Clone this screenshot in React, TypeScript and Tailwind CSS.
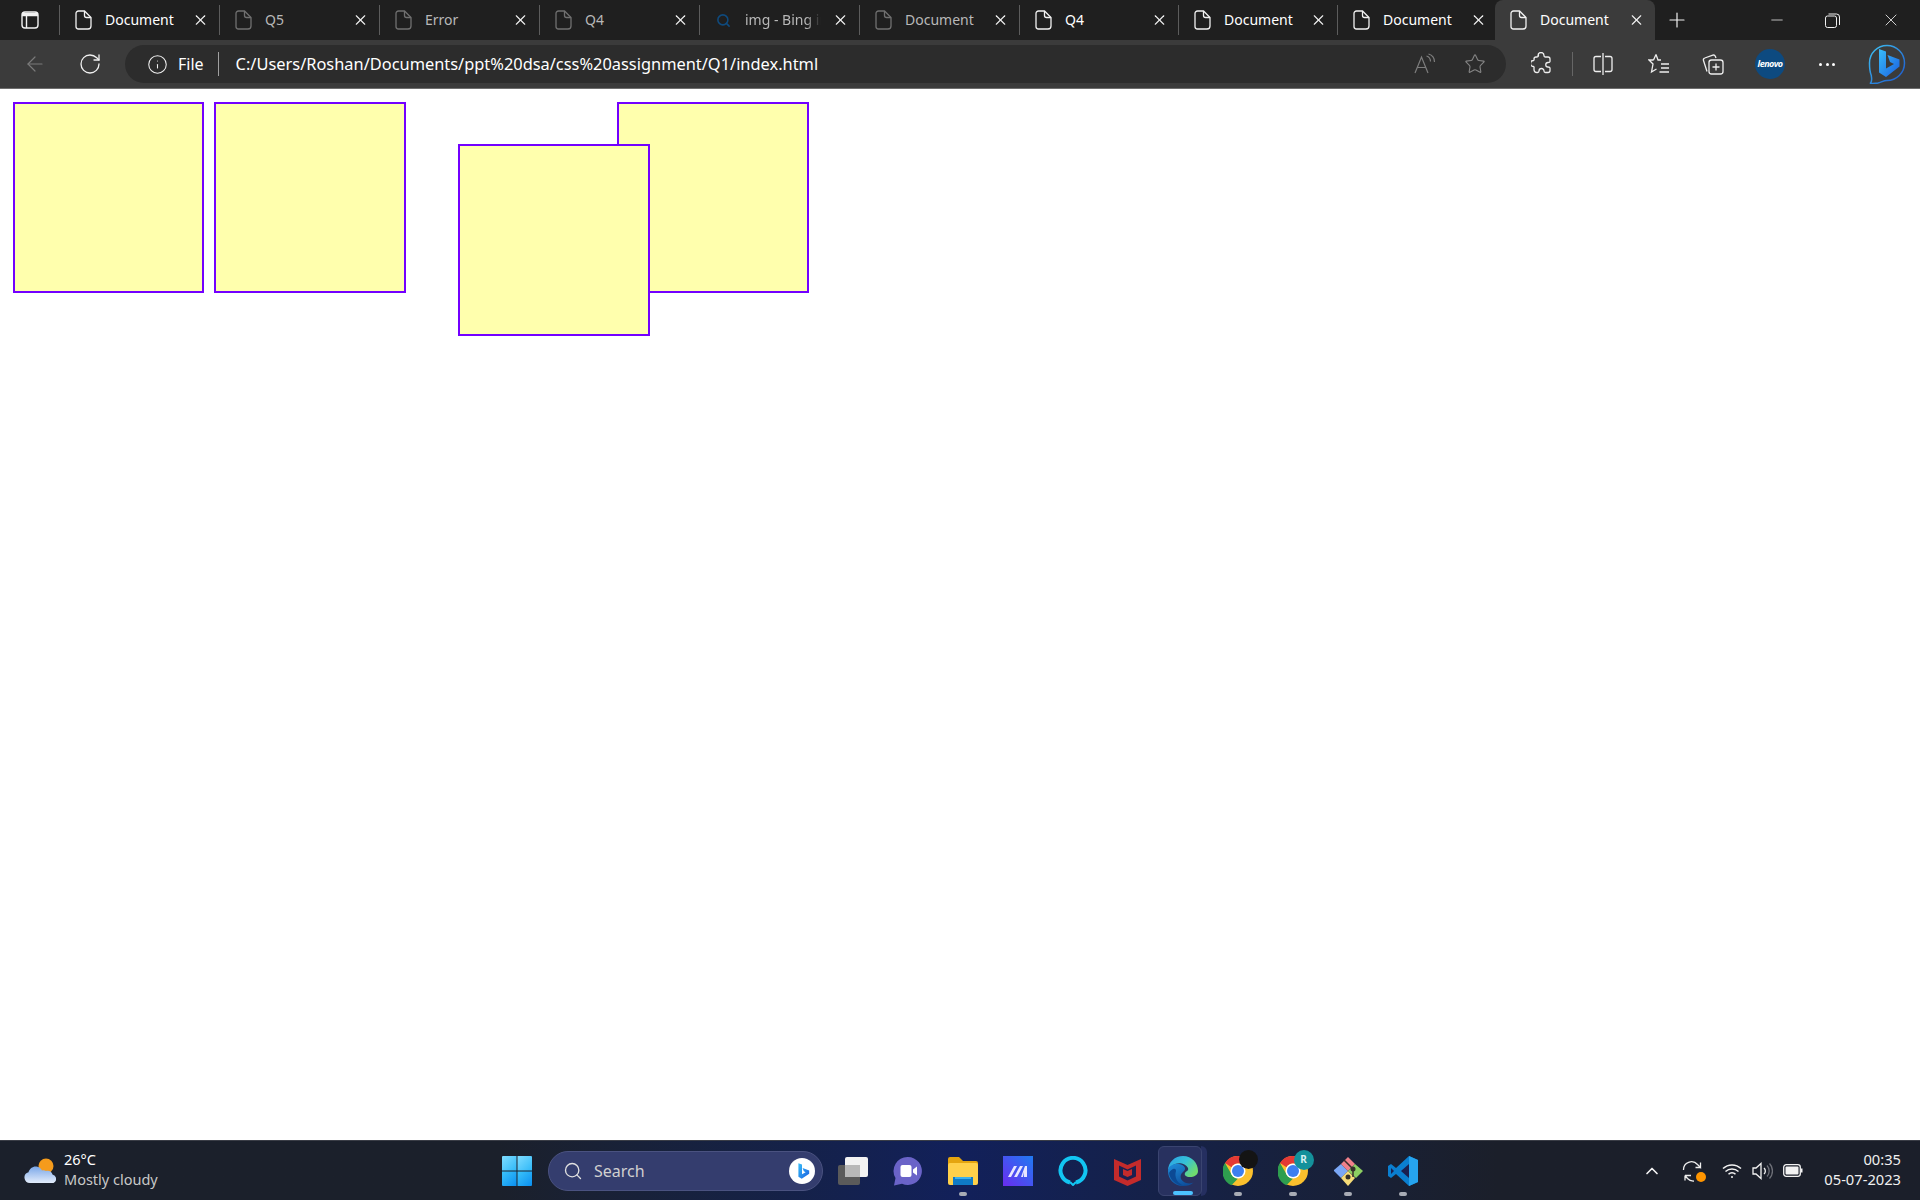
import {
  ArrowLeft,
  ChevronUp,
  Info,
  Minus,
  Plus,
  RotateCw,
  Search,
  Star,
  X,
} from "lucide-react";
import type { ReactNode } from "react";

type TabData = { title: string; dim?: boolean; bing?: boolean; active?: boolean; narrow?: boolean };

const tabs: TabData[] = [
  { title: "Document" },
  { title: "Q5", dim: true },
  { title: "Error", dim: true },
  { title: "Q4", dim: true },
  { title: "img - Bing images", dim: true, bing: true },
  { title: "Document", dim: true },
  { title: "Q4", narrow: true },
  { title: "Document", narrow: true },
  { title: "Document" },
  { title: "Document", active: true },
];

function PageIcon({ dim }: { dim?: boolean }) {
  return (
    <svg width="17" height="20" viewBox="0 0 17 20" fill="none" stroke={dim ? "#707070" : "#f2f2f2"} strokeWidth="1.3">
      <path d="M3.5 1h6l6.500 6.500V16a3 3 0 0 1-3 3H3.500A2.500 2.500 0 0 1 1 16.500v-13A2.500 2.500 0 0 1 3.500 1Z" />
      <path d="M9.500 1v4.500a2 2 0 0 0 2 2H16" />
    </svg>
  );
}

function Tab({ tab }: { tab: TabData }) {
  return (
    <div
      className={`relative flex shrink-0 items-center pl-[15px] ${tab.narrow ? "w-[159px]" : "w-[160px]"} ${
        tab.active ? "-ml-[2px] h-10 rounded-t-lg bg-[#3b3b3b]" : "my-auto h-[30px] border-l border-[#5c5c5c]"
      }`}
    >
      {tab.bing ? (
        <span className="flex w-[17px] justify-center">
          <Search size={15} color="#0f4a7d" strokeWidth={2.5} />
        </span>
      ) : (
        <PageIcon dim={tab.dim} />
      )}
      <span
        className={`-mt-[2px] ml-[13px] overflow-hidden text-[14px] whitespace-nowrap ${
          tab.bing ? "w-[76px] [mask-image:linear-gradient(to_right,black_80%,transparent)]" : "w-[78px]"
        } ${tab.dim ? "text-[#b8b8b8]" : "text-white"}`}
      >
        {tab.title}
      </span>
      <X size={17} strokeWidth={1.5} color="#f2f2f2" className="absolute right-[10px] top-1/2 -translate-y-1/2" />
    </div>
  );
}

function SidebarIcon() {
  return (
    <svg width="18" height="18" viewBox="0 0 18 18" fill="none" stroke="#f2f2f2" strokeWidth="1.4">
      <rect x="1" y="1" width="16" height="16" rx="3" />
      <path d="M1 3.500h16" strokeWidth="3.500" />
      <path d="M5.500 5V17" />
    </svg>
  );
}

function BingMark({ size }: { size: number }) {
  return (
    <svg width={size} height={size} viewBox="0 0 40 40" fill="none">
      <defs>
        <linearGradient id="bingB" x1="0" y1="0" x2="1" y2="1">
          <stop offset="0" stopColor="#37bdf8" />
          <stop offset="1" stopColor="#1a5fe0" />
        </linearGradient>
      </defs>
      <path d="M14 7l6 2v16.500l6-3.500-3-1.600-2-5.400 11 4v5.500L19.500 33 14 29.500Z" fill="url(#bingB)" />
    </svg>
  );
}

function BingButton() {
  return (
    <svg width="38" height="40" viewBox="0 0 38 40" fill="none">
      <defs>
        <linearGradient id="bingRing" x1="0" y1="0" x2="1" y2="1">
          <stop offset="0" stopColor="#3fc3f4" />
          <stop offset="1" stopColor="#1c52c8" />
        </linearGradient>
        <linearGradient id="bingB2" x1="0" y1="0" x2="1" y2="1">
          <stop offset="0" stopColor="#38bdf8" />
          <stop offset="1" stopColor="#1a5fe0" />
        </linearGradient>
      </defs>
      <path
        d="M19 1.500c9.500 0 17.500 7.500 17.500 17.500S28.500 36.500 19 36.500c-3 0-6 1.800-9 2.500-2.500.5-8.500 1-7.500 0 2-2 1-5 .8-7.500C1.800 28 1.500 23 1.500 19 1.500 9 9.500 1.500 19 1.500Z"
        stroke="url(#bingRing)"
        strokeWidth="1.500"
      />
      <path d="M11 5l7 2.500v17l8-4.500-4-2-2.500-7 12 4.500v7L18 33l-7-4.500Z" fill="url(#bingB2)" />
    </svg>
  );
}

function Toolbar() {
  return (
    <div className="flex h-[49px] items-center border-b border-[#6e6e6e] bg-[#3b3b3b]">
      <div className="flex w-[125px] shrink-0 items-center">
        <ArrowLeft size={24} strokeWidth={1.2} color="#7a7a7a" className="ml-[23px]" />
        <RotateCw size={24} strokeWidth={1.3} color="#f0f0f0" className="ml-[31px]" />
      </div>
      <div className="flex h-[38px] w-[1381px] shrink-0 items-center rounded-full bg-[#2c2c2c] text-white">
        <Info size={21} strokeWidth={1.2} color="#f0f0f0" className="ml-[22px]" />
        <span className="ml-[10px] text-[16px]">File</span>
        <span className="ml-[14px] h-[24px] w-px bg-[#a0a0a0]" />
        <span className="ml-[17px] text-[16.4px]">C:/Users/Roshan/Documents/ppt%20dsa/css%20assignment/Q1/index.html</span>
        <div className="ml-auto flex items-center gap-[28px] pr-[20px]">
          <svg width="22" height="22" viewBox="0 0 22 22" fill="none" stroke="#7d7d7d" strokeWidth="1.2">
            <path d="M1 20L7.500 4l6.500 16M3.500 14.500h8" />
            <path d="M12.500 3c2.500.7 4 2.700 4 5.500M14.500 1c3.500 1 6 4 6 8" />
          </svg>
          <Star size={22} strokeWidth={1.2} color="#858585" />
        </div>
      </div>
      <div className="flex-1 self-stretch">
        <ToolbarIcons />
      </div>
    </div>
  );
}

function ToolbarIcons() {
  return (
    <div className="flex h-full items-center text-[#eeeeee]">
      <span className="ml-[24px] flex w-[22px] justify-center">
        <svg width="21" height="24" viewBox="0 0 21 24" fill="none" stroke="#eeeeee" strokeWidth="1.300">
          <path d="M7 3.500a3 3 0 0 1 6 0c0 1 .5 1.500 1.500 1.500H17a2 2 0 0 1 2 2v2.500c0 1-1 1-2 1a2.200 2.200 0 0 0 0 4.500c1 0 2 0 2 1v2.500a2 2 0 0 1-2 2h-2.500c-1 0-1.500-.5-1.500-1.500a2.500 2.500 0 0 0-5 0c0 1-.5 1.500-1.500 1.500H6a3 3 0 0 1-3-3v-1c0-1 .5-1.500-.5-2a3 3 0 0 1 0-6c1-.5.500-1 .500-2V7a2 2 0 0 1 2-2h1c1 0 1.500-.5 1.500-1.500Z" />
        </svg>
      </span>
      <span className="ml-[20px] h-[24px] w-px bg-[#666666]" />
      <span className="ml-[20px] flex w-[20px] justify-center">
        <svg width="20" height="24" viewBox="0 0 20 24" fill="none" stroke="#eeeeee" strokeWidth="1.300">
          <path d="M10 1v22" />
          <path d="M8 4.500H3a2 2 0 0 0-2 2v11a2 2 0 0 0 2 2h5M12 4.500h5a2 2 0 0 1 2 2v11a2 2 0 0 1-2 2h-5" />
        </svg>
      </span>
      <span className="ml-[35px] flex w-[22px] justify-center">
        <svg width="22" height="22" viewBox="0 0 22 22" fill="none" stroke="#eeeeee" strokeWidth="1.300">
          <path d="M8 1.500l2 5.500h3M5.500 7H1l4 4-1.500 8L8.500 16M8 1.500L5.500 7" />
          <path d="M13 11h8M13 15h8M11.500 19h9.500" />
        </svg>
      </span>
      <span className="ml-[32px] flex w-[22px] justify-center">
        <svg width="22" height="24" viewBox="0 0 22 24" fill="none" stroke="#eeeeee" strokeWidth="1.300">
          <path d="M5 19.500L1.500 8.500a2 2 0 0 1 1.300-2.500l8-2.800a2 2 0 0 1 2.500 1l.7 1.800" />
          <rect x="7" y="8" width="14" height="14" rx="2.500" />
          <path d="M14 11.500v7M10.500 15h7" />
        </svg>
      </span>
      <span className="ml-[31px] flex h-[30px] w-[30px] items-center justify-center rounded-full bg-[#0d4a80] text-[9px] font-bold italic tracking-[-0.5px] text-white">
        lenovo
      </span>
      <span className="ml-[34px] flex w-[16px] justify-between">
        <i className="h-[3px] w-[3px] rounded-full bg-white" />
        <i className="h-[3px] w-[3px] rounded-full bg-white" />
        <i className="h-[3px] w-[3px] rounded-full bg-white" />
      </span>
      <span className="ml-[33px] flex">
        <BingButton />
      </span>
    </div>
  );
}

function WeatherIcon() {
  return (
    <svg width="32" height="28" viewBox="0 0 32 28">
      <defs>
        <linearGradient id="cloud" x1="0" y1="0" x2="0" y2="1">
          <stop offset="0" stopColor="#7aa7e8" />
          <stop offset="1" stopColor="#e3ecfb" />
        </linearGradient>
      </defs>
      <circle cx="22" cy="9" r="7.500" fill="#f59b1c" />
      <path d="M6 26a5.500 5.500 0 0 1-1.500-10.800C5.500 11.500 9 9 12.500 9.500c2.500.3 4.500 2 5.500 4 1-.5 3-.3 4 .5 2.500-1 6 .5 6.500 3.500a4.500 4.500 0 0 1 1 8.500Z" fill="url(#cloud)" />
    </svg>
  );
}

function WindowsLogo() {
  return (
    <svg width="30" height="30" viewBox="0 0 30 30">
      <defs>
        <linearGradient id="winTop" x1="0" y1="0" x2="1" y2="1">
          <stop offset="0" stopColor="#7fdcff" />
          <stop offset="1" stopColor="#2fb8f8" />
        </linearGradient>
        <linearGradient id="winBottom" x1="0" y1="0" x2="1" y2="1">
          <stop offset="0" stopColor="#3cc4fb" />
          <stop offset="1" stopColor="#0a8ff0" />
        </linearGradient>
      </defs>
      <path d="M1 0h13.500v14.500H0V1a1 1 0 0 1 1-1Z" fill="url(#winTop)" />
      <path d="M15.500 0H29a1 1 0 0 1 1 1v13.500H15.500Z" fill="url(#winTop)" />
      <path d="M0 15.500h14.500V30H1a1 1 0 0 1-1-1Z" fill="url(#winBottom)" />
      <path d="M15.500 15.500H30V29a1 1 0 0 1-1 1H15.500Z" fill="url(#winBottom)" />
    </svg>
  );
}

function ChromeLogo() {
  return (
    <svg width="30" height="30" viewBox="0 0 30 30">
      <circle cx="15" cy="15" r="15" fill="#fbc02d" />
      <path d="M15 0a15 15 0 0 1 13 7.500H15a7.500 7.500 0 0 0-6.500 3.750L2 7A15 15 0 0 1 15 0Z" fill="#e53935" />
      <path d="M2 7l6.500 11.250A7.500 7.500 0 0 0 15 22.500l-6.500 6.800A15 15 0 0 1 2 7Z" fill="#2e9e4f" />
      <circle cx="15" cy="15" r="7.500" fill="#ffffff" />
      <circle cx="15" cy="15" r="6" fill="#3d7ff0" />
    </svg>
  );
}

function GitIcon() {
  return (
    <svg width="30" height="30" viewBox="0 0 30 30">
      <path d="M8 8l7 7-7 7-7-7a1.500 1.500 0 0 1 0-1Z" fill="#7aa7f5" />
      <path d="M15 1l7 7-7 7-7-7Z" fill="#f0808a" />
      <path d="M22 8l8 7-7 7-8-7Z" fill="#8ccf62" />
      <path d="M15 15l7 7-7 8-7-8Z" fill="#f6dc78" />
      <path d="M11 4l9 9M20 13v8" stroke="#3a2d2d" strokeWidth="1.500" />
      <circle cx="20" cy="13" r="2.500" fill="#33302a" />
      <circle cx="15" cy="21" r="2.500" fill="#33302a" />
    </svg>
  );
}

function EdgeLogo() {
  return (
    <svg width="30" height="30" viewBox="0 0 30 30">
      <defs>
        <linearGradient id="edgeTop" x1="0" y1="0" x2="1" y2="0.600">
          <stop offset="0" stopColor="#2a9fe6" />
          <stop offset="0.550" stopColor="#35c1d8" />
          <stop offset="1" stopColor="#6fdc6f" />
        </linearGradient>
        <linearGradient id="edgeLow" x1="0" y1="0" x2="0.600" y2="1">
          <stop offset="0" stopColor="#1f8fdc" />
          <stop offset="1" stopColor="#0e4f9c" />
        </linearGradient>
      </defs>
      <path
        d="M15 0C24 0 30 7 30 15C30 19 26 21 22 21C18 21 16 19 17 17C18 15 21 15 20 12C18 8 12 6 7 8C3 10 0 13 0 15C0 6 7 0 15 0Z"
        fill="url(#edgeTop)"
      />
      <path
        d="M0 15C0 10 6 7 11 8C17 9 19 13 15 16C11 19 12 25 18 27C22 28 25 27 26 26C23 29 19 30 15 30C6 30 0 23 0 15Z"
        fill="url(#edgeLow)"
      />
      <path d="M8 15C6 21 9 28 17 29.800C10 30 2 25 1 17C3 13 8 11 8 15Z" fill="#0c4a94" />
    </svg>
  );
}

function Cell({ children, dot, active }: { children: ReactNode; dot?: boolean; active?: boolean }) {
  return (
    <div className="relative flex h-[50px] w-[55px] shrink-0 items-center justify-center">
      {active && (
        <>
          <span className="absolute left-[46px] top-0 h-[50px] w-[6px] rounded-r-md bg-[#252f60]" />
          <span className="absolute left-[3px] top-0 h-[50px] w-[44px] rounded-md border border-[#3a4470] bg-[#28315f]" />
        </>
      )}
      <span className="relative flex">{children}</span>
      {dot && <span className="absolute bottom-0 left-1/2 h-[4px] w-[8px] -translate-x-1/2 rounded-full bg-[#a8acb5]" />}
      {active && <span className="absolute bottom-[1px] left-1/2 h-[4px] w-[20px] -translate-x-1/2 rounded-full bg-[#4cc2ff]" />}
    </div>
  );
}

function TaskbarApps() {
  return (
    <div className="flex items-center">
      <Cell>
        <svg width="30" height="28" viewBox="0 0 30 28">
          <rect x="0" y="8" width="22" height="20" rx="2" fill="#5a5a5a" />
          <rect x="7" y="0" width="23" height="20" rx="2" fill="#f2f2f2" />
          <rect x="7" y="8" width="15" height="12" fill="#b8b8b8" />
        </svg>
      </Cell>
      <Cell>
        <svg width="30" height="30" viewBox="0 0 30 30">
          <path d="M15 1a14 14 0 1 1-6 26.700L1 29.500l1.500-7.500A14 14 0 0 1 15 1Z" fill="#6a63c8" />
          <rect x="7.500" y="9" width="11" height="12" rx="2" fill="#ffffff" />
          <path d="M20 13.500l4-3v9l-4-3Z" fill="#ffffff" />
        </svg>
      </Cell>
      <Cell dot>
        <svg width="30" height="28" viewBox="0 0 30 28">
          <path d="M0 2a2 2 0 0 1 2-2h9l4 4h13a2 2 0 0 1 2 2v2H0Z" fill="#e5a50f" />
          <rect x="0" y="6" width="30" height="22" rx="2" fill="#ffd04a" />
          <rect x="5" y="20" width="20" height="8" fill="#0f7ac6" />
          <rect x="7" y="20" width="16" height="2" fill="#3db1ec" />
        </svg>
      </Cell>
      <Cell>
        <svg width="30" height="30" viewBox="0 0 30 30">
          <defs>
            <linearGradient id="ms" x1="0" y1="1" x2="1" y2="0">
              <stop offset="0" stopColor="#6a2cf0" />
              <stop offset="1" stopColor="#1f7bf2" />
            </linearGradient>
          </defs>
          <rect width="30" height="30" fill="url(#ms)" />
          <path d="M5 21l6-11h3l-6 11ZM11 21l6-11h3l-6 11ZM18 21l4-11h2v11h-3v-5l-1 5Z" fill="#e8e6ff" />
        </svg>
      </Cell>
      <Cell>
        <svg width="30" height="30" viewBox="0 0 30 30" fill="none">
          <path d="M12 26.500A12.500 12.500 0 1 1 18 26.500" stroke="#12c5f2" strokeWidth="4" />
          <path d="M12 26l3 3 3-3" stroke="#12c5f2" strokeWidth="2" />
        </svg>
      </Cell>
      <Cell>
        <svg width="27" height="30" viewBox="0 0 27 30">
          <path d="M0 3l13.500 6L27 3v21L13.500 30 0 24Z" fill="#c42b2b" />
          <path d="M5 9.500l8.500 4 8.500-4v11l-8.500 4-8.500-4Z" fill="#1a2050" />
          <path d="M9 13l4.500 2 4.500-2v6l-4.500 2L9 19Z" fill="#c42b2b" />
        </svg>
      </Cell>
      <Cell active>
        <EdgeLogo />
      </Cell>
      <Cell dot>
        <span className="relative flex">
          <ChromeLogo />
          <span className="absolute -right-[5px] -top-[6px] h-[19px] w-[19px] rounded-full bg-[#141414]" />
        </span>
      </Cell>
      <Cell dot>
        <span className="relative flex">
          <ChromeLogo />
          <span className="absolute -right-[6px] -top-[6px] flex h-[20px] w-[20px] items-center justify-center rounded-full bg-[#14919b] text-[10px] font-bold text-[#d8f0f2]">
            R
          </span>
        </span>
      </Cell>
      <Cell dot>
        <GitIcon />
      </Cell>
      <Cell dot>
        <svg width="30" height="30" viewBox="0 0 30 30">
          <path d="M21 0l9 4v22l-9 4-13-12-5 4-3-2V10l3-2 5 4Z" fill="#0a7fd0" />
          <path d="M21 0l9 4v22l-9 4Z" fill="#26a4ee" />
          <path d="M21 8l-8 7 8 7Z" fill="#1a2050" />
          <path d="M3 12l3 3-3 3Z" fill="#1a2050" />
        </svg>
      </Cell>
    </div>
  );
}

function Tray() {
  return (
    <div className="ml-auto flex items-center pr-[19px] text-white">
      <ChevronUp size={20} strokeWidth={2} color="#f5f5f5" />
      <span className="relative ml-[20px] flex">
        <svg width="22" height="22" viewBox="0 0 22 22" fill="none" stroke="#eeeeee" strokeWidth="1.300">
          <path d="M1.500 10a8 8 0 0 1 14-5.500l3 3V2.500M18.500 7.500h-5M3 15.500h6M3 15.500v5M3 15.500l2.500 3A8 8 0 0 0 12 21" />
        </svg>
        <span className="absolute right-[-2px] bottom-[0px] h-[10px] w-[10px] rounded-full bg-[#ff9500]" />
      </span>
      <span className="ml-[18px] flex">
        <svg width="20" height="16" viewBox="0 0 20 16" fill="none" stroke="#f2f2f2" strokeWidth="1.500">
          <path d="M1 5.500a13 13 0 0 1 18 0M3.500 8.500a9.500 9.500 0 0 1 13 0M6.500 11.300a5 5 0 0 1 7 0" />
          <circle cx="10" cy="14" r="1" fill="#f2f2f2" stroke="none" />
        </svg>
      </span>
      <span className="ml-[10px] flex">
        <svg width="21" height="18" viewBox="0 0 21 18" fill="none" strokeWidth="1.300">
          <path d="M1 6h3l5-4.500v15L4 12H1Z" stroke="#f2f2f2" />
          <path d="M12 6a4 4 0 0 1 0 6" stroke="#f2f2f2" />
          <path d="M15 3.500a8 8 0 0 1 0 11M17.500 1.500a11 11 0 0 1 0 15" stroke="#6e7078" />
        </svg>
      </span>
      <span className="ml-[10px] flex">
        <svg width="20" height="13" viewBox="0 0 20 13" fill="none">
          <rect x="0.700" y="0.700" width="16.600" height="11.600" rx="2.500" stroke="#f2f2f2" strokeWidth="1.300" />
          <rect x="2.500" y="2.500" width="13" height="8" rx="1" fill="#f2f2f2" />
          <rect x="18" y="4.500" width="1.500" height="4" fill="#f2f2f2" />
        </svg>
      </span>
      <div className="-mt-[4px] ml-[17px] flex w-[81px] flex-col items-end text-[14.7px] leading-[20px] text-[#f0f0f0]">
        <span>00:35</span>
        <span>05-07-2023</span>
      </div>
    </div>
  );
}

function Taskbar() {
  return (
    <footer className="flex h-[60px] items-center border-t border-[#3a3d46] bg-linear-to-r from-[#1b202b] from-[26%] via-[#12205a] via-[50%] to-[#1b1f2a] to-[78%]">
      <div className="flex w-[502px] shrink-0 items-center pl-[24px]">
        <WeatherIcon />
        <div className="-mt-[4px] ml-[8px] flex flex-col text-[14.5px] leading-[20px]">
          <span className="text-white">26°C</span>
          <span className="text-[#c8c8c8]">Mostly cloudy</span>
        </div>
      </div>
      <WindowsLogo />
      <div className="ml-[16px] flex h-[40px] w-[275px] shrink-0 items-center rounded-full border border-[#4a5280] bg-[#343d6e] pl-[14px] pr-[7px]">
        <Search size={20} strokeWidth={1.6} color="#e0e0e0" />
        <span className="ml-[11px] text-[16px] text-[#d0d0d0]">Search</span>
        <span className="ml-auto flex h-[26px] w-[26px] items-center justify-center rounded-full bg-white">
          <BingMark size={24} />
        </span>
      </div>
      <div className="ml-[2px]">
        <TaskbarApps />
      </div>
      <Tray />
    </footer>
  );
}

function Box({ shifted }: { shifted?: boolean }) {
  return (
    <div
      className={`shrink-0 border-2 border-[#7300ff] bg-[#ffffad] ${
        shifted ? "relative top-[42px] left-[43px] h-[192px] w-[192px]" : "h-[191px] w-[191.6px]"
      }`}
    />
  );
}

export default function App() {
  return (
    <div className="flex h-[1200px] flex-col overflow-hidden bg-white font-['Noto_Sans',sans-serif]">
      <header className="flex h-10 items-center bg-[#1f1f1f]">
        <div className="flex w-[59px] shrink-0 justify-center">
          <SidebarIcon />
        </div>
        {tabs.map((t, i) => (
          <Tab key={i} tab={t} />
        ))}
        <Plus size={24} strokeWidth={1.2} color="#f2f2f2" className="ml-[10px]" />
        <div className="ml-auto flex items-center text-[#f0f0f0]">
          <Minus size={18} strokeWidth={1} className="mr-[39px]" />
          <svg width="15" height="15" viewBox="0 0 15 15" fill="none" stroke="#f0f0f0" strokeWidth="1" className="mr-[41px]">
            <rect x="0.500" y="3" width="11" height="11.500" rx="2" />
            <path d="M3.500 1h8a3 3 0 0 1 3 3v8" />
          </svg>
          <X size={20} strokeWidth={1} className="mr-[19px]" />
        </div>
      </header>
      <Toolbar />
      <main className="flex flex-1 items-start gap-[9.7px] bg-white pl-[12.9px] pt-[13px]">
        <Box />
        <Box />
        <Box shifted />
        <Box />
      </main>
      <Taskbar />
    </div>
  );
}
